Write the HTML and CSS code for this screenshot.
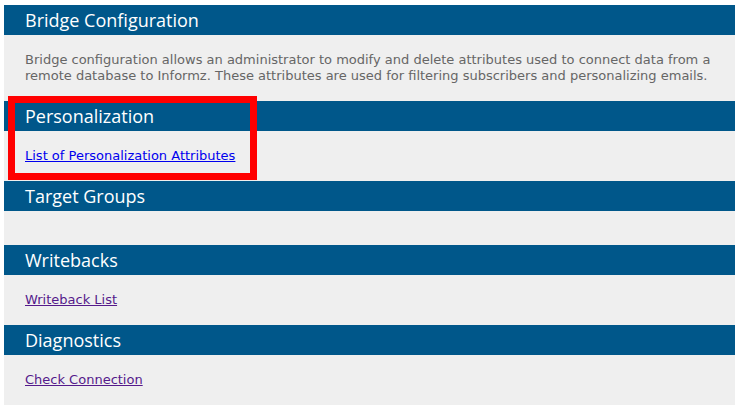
FILE: index.html
```html
<!DOCTYPE html>
<html lang="en">
<head>
    <meta charset="UTF-8">
    <title>Bridge Configuration</title>
    <link rel="stylesheet" href="styles.css">
</head>
<body>
<div class="page">
    <section class="block">
        <h2 class="block-title">Bridge Configuration</h2>
        <div class="block-body">
            <p class="intro">Bridge configuration allows an administrator to modify and delete attributes used to connect data from a remote database to Informz. These attributes are used for filtering subscribers and personalizing emails.</p>
        </div>
    </section>
    <section class="block">
        <h2 class="block-title">Personalization</h2>
        <div class="block-body">
            <a href="#attributes">List of Personalization Attributes</a>
        </div>
    </section>
    <section class="block">
        <h2 class="block-title">Target Groups</h2>
        <div class="block-body"></div>
    </section>
    <section class="block">
        <h2 class="block-title">Writebacks</h2>
        <div class="block-body">
            <a class="seen" href="#writebacks">Writeback List</a>
        </div>
    </section>
    <section class="block">
        <h2 class="block-title">Diagnostics</h2>
        <div class="block-body">
            <a class="seen" href="#connection">Check Connection</a>
        </div>
    </section>
    <div class="highlight"></div>
</div>
</body>
</html>
```

FILE: styles.css
```css
*{
    margin: 0;
    padding: 0;
}
body{
    margin: 5px 4px;
    background: #ffffff;
    font-family: "DejaVu Sans", Verdana, sans-serif;
}
.page{
    position: relative;
}
.block-title{
    height: 30px;
    line-height: 30px;
    padding-left: 21px;
    background: #00578a;
    color: #ffffff;
    font-family: "Open Sans", "Noto Sans", sans-serif;
    font-size: 18px;
    font-weight: normal;
}
.block-body{
    padding: 17px 21px;
    background: #efefef;
    font-size: 13px;
    line-height: 16px;
}
.intro{
    color: #666666;
}
a{
    color: #0000ee;
}
a.seen{
    color: #551a8b;
}
.highlight{
    position: absolute;
    left: 4px;
    top: 91px;
    width: 235px;
    height: 70px;
    border: 7px solid #ff0000;
}
```
